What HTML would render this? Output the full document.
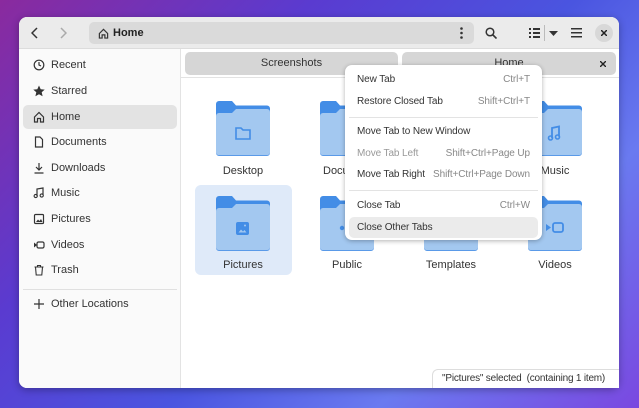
<!DOCTYPE html>
<html><head><meta charset="utf-8"><style>
*{margin:0;padding:0;box-sizing:border-box}
body{width:639px;height:408px;overflow:hidden;font-family:"Liberation Sans",sans-serif;font-size:11px;color:#333;
background:linear-gradient(135deg,#8a2a9e 0%,#5a3bd0 30%,#4a55e0 55%,#6a7af0 75%,#7a48e0 100%);position:relative}
.win{position:absolute;left:19px;top:17px;width:600px;height:371px;background:#fff;border-radius:8px;overflow:hidden;box-shadow:0 2px 8px rgba(0,0,0,.3)}
.hdr{position:absolute;left:0;top:0;width:600px;height:32px;background:#ebebeb;border-bottom:1px solid #dcdcdc}
.side{position:absolute;left:0;top:32px;width:162px;height:339px;background:#fafafa;border-right:1px solid #e3e3e3}
.si{position:absolute;left:4px;width:154px;height:24px;border-radius:5px;display:flex;align-items:center;padding-left:10px;color:#333;font-size:11px}
.si svg{width:12px;height:12px;margin-right:6px}
.path{position:absolute;left:70px;top:5px;width:385px;height:22px;background:#dadada;border-radius:5px}
.tab{position:absolute;top:35px;height:23px;background:#d6d6d6;border-radius:5px;text-align:center;line-height:23px;font-size:11px;color:#333}
.f{position:absolute;width:54px;height:56px}
.lbl{position:absolute;width:100px;text-align:center;font-size:11px;color:#333}
.menu{position:absolute;left:345px;top:65px;width:197px;height:175px;background:#fff;border-radius:7px;box-shadow:0 1px 5px rgba(0,0,0,.3)}
.mi{position:absolute;left:4px;width:189px;height:21px;border-radius:5px;line-height:21px;padding:0 8px;font-size:10px;color:#333;display:flex;justify-content:space-between;white-space:nowrap;letter-spacing:-.1px}
.mi span:last-child{color:#888}
.sep{position:absolute;left:4px;width:189px;height:1px;background:#e3e3e3}
</style></head><body>
<div class="win">
 <div class="hdr">
  <svg style="position:absolute;left:12px;top:10px" width="8" height="12" viewBox="0 0 8 12"><path d="M6 1L1 6l5 5" stroke="#333" stroke-width="1.5" fill="none"/></svg>
  <svg style="position:absolute;left:40px;top:10px" width="8" height="12" viewBox="0 0 8 12"><path d="M2 1l5 5-5 5" stroke="#aaa" stroke-width="1.5" fill="none"/></svg>
  <div class="path">
   <svg style="position:absolute;left:9px;top:6px" width="11" height="11" viewBox="0 0 12 12"><path d="M1.5 6L6 1.5 10.5 6V11h-3V7.5h-3V11h-3z" stroke="#333" stroke-width="1.3" fill="none"/></svg>
   <span style="position:absolute;left:24px;top:5px;font-weight:bold;font-size:11px;color:#222">Home</span>
   <svg style="position:absolute;left:371px;top:5px" width="3" height="12"><circle cx="1.5" cy="1.5" r="1.3" fill="#333"/><circle cx="1.5" cy="6" r="1.3" fill="#333"/><circle cx="1.5" cy="10.5" r="1.3" fill="#333"/></svg>
  </div>
  <svg style="position:absolute;left:466px;top:10px" width="12" height="12" viewBox="0 0 12 12"><circle cx="5" cy="5" r="3.8" stroke="#333" stroke-width="1.5" fill="none"/><path d="M8 8l3.5 3.5" stroke="#333" stroke-width="1.6"/></svg>
  <svg style="position:absolute;left:510px;top:11px" width="11" height="10"><g fill="#333"><rect x="0" y="0" width="2" height="2"/><rect x="0" y="4" width="2" height="2"/><rect x="0" y="8" width="2" height="2"/><rect x="4" y="0" width="7" height="2"/><rect x="4" y="4" width="7" height="2"/><rect x="4" y="8" width="7" height="2"/></g></svg>
  <div style="position:absolute;left:525px;top:8px;width:1px;height:16px;background:#bbb"></div>
  <svg style="position:absolute;left:530px;top:14px" width="9" height="5"><path d="M0 0h9L4.5 5z" fill="#333"/></svg>
  <svg style="position:absolute;left:552px;top:11px" width="11" height="10"><g fill="#333"><rect y="0" width="11" height="1.5"/><rect y="4" width="11" height="1.5"/><rect y="8" width="11" height="1.5"/></g></svg>
  <div style="position:absolute;left:576px;top:7px;width:18px;height:18px;border-radius:50%;background:#d8d8d8"></div>
  <svg style="position:absolute;left:582px;top:13px" width="6" height="6"><path d="M0 0l6 6M6 0L0 6" stroke="#222" stroke-width="1.5"/></svg>
 </div>
 <div class="side">
  <div class="si" style="top:4px"><svg viewBox="0 0 12 12"><circle cx="6" cy="6" r="4.8" stroke="#333" stroke-width="1.2" fill="none"/><path d="M6 3v3l2 1" stroke="#333" stroke-width="1.2" fill="none"/></svg>Recent</div>
  <div class="si" style="top:30px"><svg viewBox="0 0 12 12"><path d="M6 .5l1.7 3.7 4 .4-3 2.7.9 4L6 9.3 2.4 11.3l.9-4-3-2.7 4-.4z" fill="#333"/></svg>Starred</div>
  <div class="si" style="top:56px;background:#e3e3e3"><svg viewBox="0 0 12 12"><path d="M1.5 6L6 1.5 10.5 6V11h-3V7.5h-3V11h-3z" stroke="#333" stroke-width="1.2" fill="none"/></svg>Home</div>
  <div class="si" style="top:81px"><svg viewBox="0 0 12 12"><path d="M2.5 1h4.5l2.5 2.5V11h-7z" stroke="#333" stroke-width="1.2" fill="none"/></svg>Documents</div>
  <div class="si" style="top:107px"><svg viewBox="0 0 12 12"><path d="M6 1v7M3 5l3 3 3-3M1.5 11h9" stroke="#333" stroke-width="1.2" fill="none"/></svg>Downloads</div>
  <div class="si" style="top:132px"><svg viewBox="0 0 12 12"><path d="M4 9V2l6-1v7" stroke="#333" stroke-width="1.2" fill="none"/><circle cx="2.7" cy="9" r="1.6" stroke="#333" stroke-width="1.1" fill="none"/><circle cx="8.7" cy="8.5" r="1.6" stroke="#333" stroke-width="1.1" fill="none"/></svg>Music</div>
  <div class="si" style="top:158px"><svg viewBox="0 0 12 12"><rect x="1.5" y="1.5" width="9" height="9" rx="1" stroke="#333" stroke-width="1.2" fill="none"/><path d="M3 9l2-2.5 1.5 1.5L8 6l1.5 3z" fill="#333"/></svg>Pictures</div>
  <div class="si" style="top:184px"><svg viewBox="0 0 12 12"><rect x="4" y="3" width="7" height="6" rx="1.5" stroke="#333" stroke-width="1.2" fill="none"/><path d="M1 3.5v5l3-2.5z" fill="#333"/></svg>Videos</div>
  <div class="si" style="top:209px"><svg viewBox="0 0 12 12"><path d="M1.5 3h9M4.5 3V1.5h3V3M2.5 3l.7 8h5.6l.7-8" stroke="#333" stroke-width="1.1" fill="none"/></svg>Trash</div>
  <div style="position:absolute;left:4px;top:240px;width:154px;height:1px;background:#e0e0e0"></div>
  <div class="si" style="top:243px"><svg viewBox="0 0 12 12"><path d="M6 1v10M1 6h10" stroke="#333" stroke-width="1.2"/></svg>Other Locations</div>
 </div>
 <div class="tab" style="left:166px;width:213px">Screenshots</div>
 <div class="tab" style="left:383px;width:214px">Home<svg style="position:absolute;right:10px;top:9px" width="6" height="6"><path d="M0 0l6 6M6 0L0 6" stroke="#222" stroke-width="1.4"/></svg></div>
 <div style="position:absolute;left:162px;top:60px;width:438px;height:1px;background:#e3e3e3"></div>
 <div style="position:absolute;left:176px;top:168px;width:97px;height:90px;background:#dfeaf9;border-radius:6px"></div>
</div>
<svg width="0" height="0" style="position:absolute"><defs>
<g id="fold"><path d="M0 4a3 3 0 013-3h13l4 4.5H51a3 3 0 013 3V50a3 3 0 01-3 3H3a3 3 0 01-3-3z" fill="#438de6"/><path d="M0 16a3 3 0 013-3h13l4-4h31a3 3 0 013 3V52a3 3 0 01-3 3H3a3 3 0 01-3-3z" fill="#a3c8f0"/><path d="M0 52v1a3 3 0 003 3h48a3 3 0 003-3v-1a3 3 0 01-3 3H3a3 3 0 01-3-3z" fill="#5a9ae8"/></g>
</defs></svg>
<svg class="f" style="left:216px;top:100px" viewBox="0 0 54 56"><use href="#fold"/><path d="M20 28h5l2 2h7v9H20z" stroke="#438de6" stroke-width="1.6" fill="none"/></svg>
<svg class="f" style="left:320px;top:100px" viewBox="0 0 54 56"><use href="#fold"/></svg>
<svg class="f" style="left:528px;top:100px" viewBox="0 0 54 56"><use href="#fold"/><path d="M24 38V28l7-1.5v10" stroke="#438de6" stroke-width="1.8" fill="none"/><circle cx="22.5" cy="38" r="2" stroke="#438de6" stroke-width="1.6" fill="none"/><circle cx="29.5" cy="37" r="2" stroke="#438de6" stroke-width="1.6" fill="none"/></svg>
<div class="lbl" style="left:193px;top:165px">Desktop</div>
<div class="lbl" style="left:297px;top:165px;text-align:left;padding-left:26px">Docu</div>
<div class="lbl" style="left:505px;top:165px">Music</div>
<svg class="f" style="left:216px;top:195px" viewBox="0 0 54 56"><use href="#fold"/><rect x="20" y="27" width="13" height="13" rx="2" fill="#438de6"/><path d="M22.5 37.5l2.5-3 2 2 1.5-1.5 2 2.5z" fill="#a3c8f0"/><circle cx="29" cy="30.5" r="1" fill="#a3c8f0"/></svg>
<svg class="f" style="left:320px;top:195px" viewBox="0 0 54 56"><use href="#fold"/><circle cx="22" cy="33" r="2.2" fill="#438de6"/></svg>
<svg class="f" style="left:424px;top:195px" viewBox="0 0 54 56"><use href="#fold"/></svg>
<svg class="f" style="left:528px;top:195px" viewBox="0 0 54 56"><use href="#fold"/><rect x="25" y="28" width="10" height="9" rx="2" stroke="#438de6" stroke-width="1.8" fill="none"/><path d="M18 29v7l5-3.5z" fill="#438de6"/></svg>
<div class="lbl" style="left:193px;top:259px">Pictures</div>
<div class="lbl" style="left:297px;top:259px">Public</div>
<div class="lbl" style="left:401px;top:259px">Templates</div>
<div class="lbl" style="left:505px;top:259px">Videos</div>
<div style="position:absolute;left:432px;top:369px;width:187px;height:19px;background:#fff;border:1px solid #ddd;border-right:none;border-bottom:none;border-top-left-radius:6px;font-size:10px;line-height:18px;padding-left:9px;color:#333;white-space:nowrap;overflow:hidden;letter-spacing:-.2px">"Pictures" selected &nbsp;(containing 1 item)</div>
<div class="menu">
 <div class="mi" style="top:4px"><span>New Tab</span><span>Ctrl+T</span></div>
 <div class="mi" style="top:26px"><span>Restore Closed Tab</span><span>Shift+Ctrl+T</span></div>
 <div class="sep" style="top:52px"></div>
 <div class="mi" style="top:56px"><span>Move Tab to New Window</span><span></span></div>
 <div class="mi" style="top:78px"><span style="color:#999">Move Tab Left</span><span>Shift+Ctrl+Page Up</span></div>
 <div class="mi" style="top:99px"><span>Move Tab Right</span><span>Shift+Ctrl+Page Down</span></div>
 <div class="sep" style="top:125px"></div>
 <div class="mi" style="top:130px"><span>Close Tab</span><span>Ctrl+W</span></div>
 <div class="mi" style="top:152px;background:#ebebeb"><span>Close Other Tabs</span><span></span></div>
</div>
</body></html>
